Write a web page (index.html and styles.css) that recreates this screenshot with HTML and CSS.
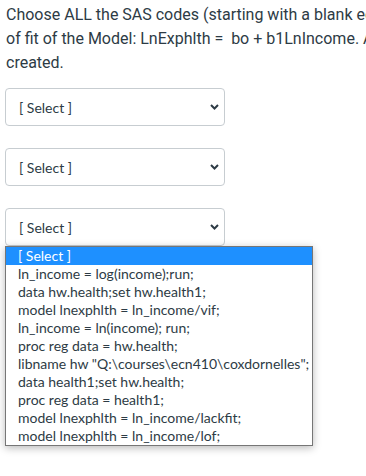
FILE: index.html
```html
<!DOCTYPE html>
<html>
<head>
<meta charset="utf-8">
<link rel="stylesheet" href="styles.css">
</head>
<body>
<div class="question">
  <p class="prompt">Choose ALL the SAS codes (starting with a blank editor window) to test the goodness<br>of fit of the Model: LnExphlth =&nbsp; bo + b1LnIncome. Assume the data set has been<br>created.</p>
  <div class="answers">
    <div class="select">
      <span class="select-text">[ Select ]</span>
      <svg class="chevron" width="9" height="6" viewBox="0 0 9 6"><path d="M1 1 L4.5 4.5 L8 1" fill="none" stroke="#2d3b45" stroke-width="2"/></svg>
    </div>
    <div class="select">
      <span class="select-text">[ Select ]</span>
      <svg class="chevron" width="9" height="6" viewBox="0 0 9 6"><path d="M1 1 L4.5 4.5 L8 1" fill="none" stroke="#2d3b45" stroke-width="2"/></svg>
    </div>
    <div class="select-wrap">
      <div class="select">
        <span class="select-text">[ Select ]</span>
        <svg class="chevron" width="9" height="6" viewBox="0 0 9 6"><path d="M1 1 L4.5 4.5 L8 1" fill="none" stroke="#2d3b45" stroke-width="2"/></svg>
      </div>
      <ul class="listbox">
        <li class="option selected">[ Select ]</li>
        <li class="option">ln_income = log(income);run;</li>
        <li class="option">data hw.health;set hw.health1;</li>
        <li class="option">model lnexphlth = ln_income/vif;</li>
        <li class="option">ln_income = ln(income); run;</li>
        <li class="option">proc reg data = hw.health;</li>
        <li class="option">libname hw "Q:\courses\ecn410\coxdornelles";</li>
        <li class="option">data health1;set hw.health;</li>
        <li class="option">proc reg data = health1;</li>
        <li class="option">model lnexphlth = ln_income/lackfit;</li>
        <li class="option">model lnexphlth = ln_income/lof;</li>
      </ul>
    </div>
  </div>
</div>
</body>
</html>
```

FILE: styles.css
```css
html, body {
  margin: 0;
  padding: 0;
  background: #ffffff;
  overflow: hidden;
}

.question {
  width: 366px;
  height: 476px;
  overflow: hidden;
}

.prompt {
  margin: 0;
  padding: 3px 0 0 6px;
  font-family: Roboto, "Liberation Sans", sans-serif;
  font-size: 16px;
  line-height: 24px;
  color: #2d3b45;
  white-space: nowrap;
}

.answers {
  display: flex;
  flex-direction: column;
  gap: 22px;
  margin-top: 13px;
  padding-left: 5px;
}

.select-wrap {
  position: relative;
}

.select {
  box-sizing: border-box;
  width: 220px;
  height: 38px;
  border: 1px solid #c7cdd1;
  border-radius: 4px;
  background: #ffffff;
  display: flex;
  align-items: center;
  justify-content: space-between;
  padding: 0 5px 0 13px;
  font-family: Lato, "Liberation Sans", sans-serif;
  font-size: 14px;
  color: #2d3b45;
}

.chevron {
  display: block;
}

.listbox {
  position: absolute;
  left: 0;
  top: 38px;
  box-sizing: border-box;
  width: 308px;
  margin: 0;
  padding: 0;
  list-style: none;
  background: #ffffff;
  border: 1px solid #767676;
  box-shadow: 0 2px 8px rgba(0, 0, 0, 0.28);
  font-family: Lato, "Liberation Sans", sans-serif;
  font-size: 14px;
  color: #2d3b45;
}

.option {
  height: 18px;
  line-height: 18px;
  padding-left: 12px;
  white-space: nowrap;
}

.option.selected {
  background: #1e90ff;
  color: #ffffff;
}
```
